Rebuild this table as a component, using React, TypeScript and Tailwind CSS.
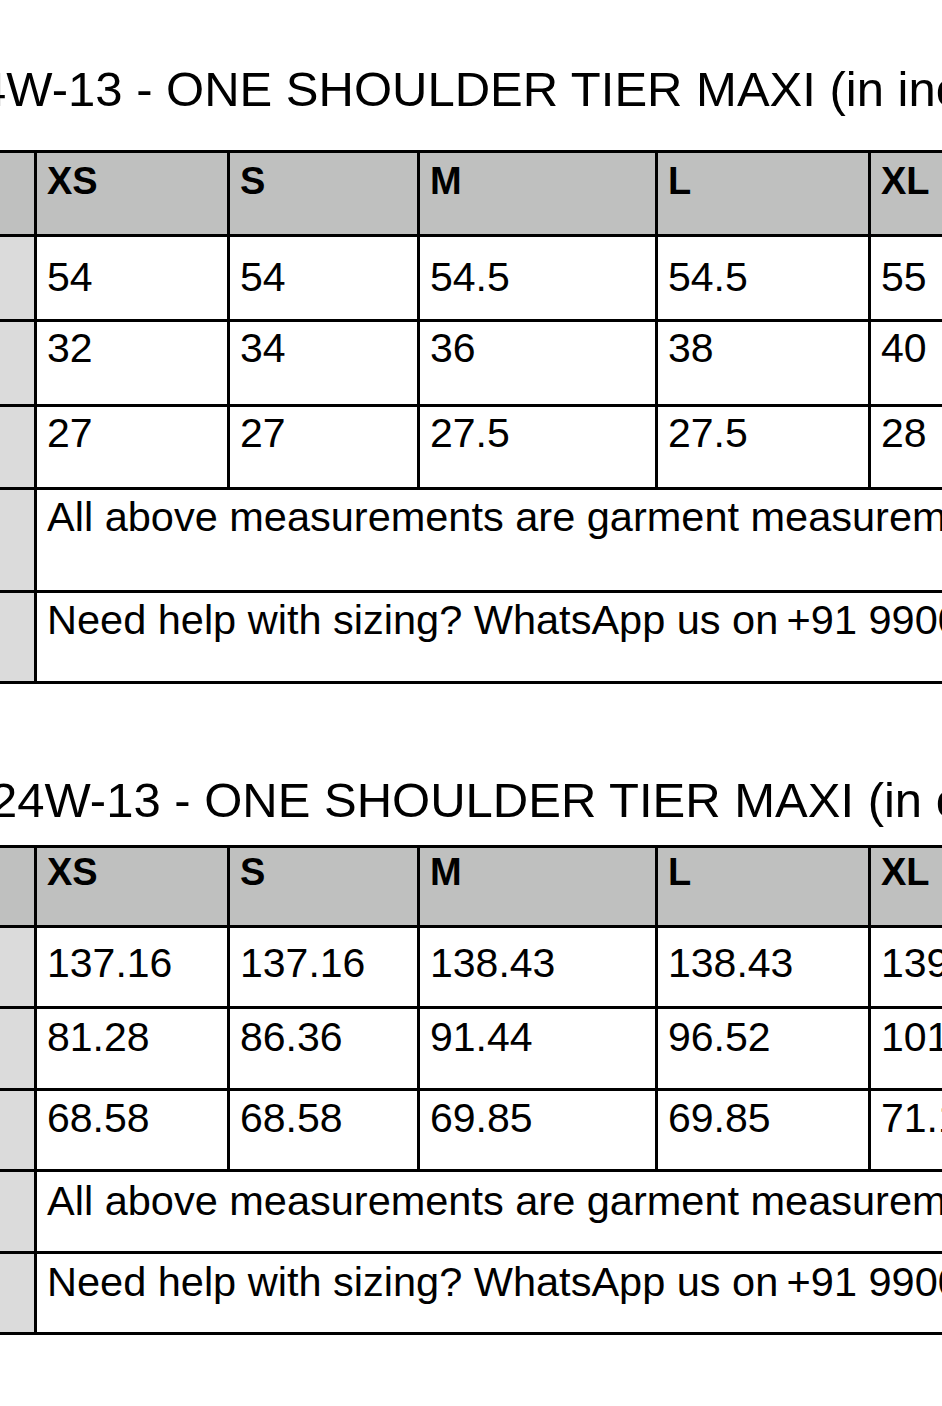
import React from 'react';

// ─── Data ─────────────────────────────────────────────────────────────────────

interface Row {
  cells: string[];
  h: string;   // row height incl. bottom border
  pt: string;  // text offset inside the cell
}

interface Chart {
  title: string;
  titleGap: string;
  tableGap: string;
  header: Row;
  rows: Row[];
  note: Row;
  help: Row;
}

const SIZES = ['XS', 'S', 'M', 'L', 'XL'];

// column widths include the 3px right border
const COLS = ['w-[193px]', 'w-[190px]', 'w-[238px]', 'w-[213px]', 'w-[240px]'];

const NOTE = 'All above measurements are garment measurements';
const HELP = 'Need help with sizing? WhatsApp us on\u2009+91 99000 00000';

const charts: Chart[] = [
  {
    title: 'SS24W-13 - ONE SHOULDER TIER MAXI (in inches)',
    titleGap: 'pt-[65px]',
    tableGap: 'mt-[36px]',
    header: { cells: SIZES, h: 'h-[84px]', pt: 'pt-[9px]' },
    rows: [
      { cells: ['54', '54', '54.5', '54.5', '55'], h: 'h-[85px]', pt: 'pt-[20px]' },
      { cells: ['32', '34', '36', '38', '40'], h: 'h-[85px]', pt: 'pt-[6px]' },
      { cells: ['27', '27', '27.5', '27.5', '28'], h: 'h-[83px]', pt: 'pt-[6px]' },
    ],
    note: { cells: [NOTE], h: 'h-[103px]', pt: 'pt-[6px]' },
    help: { cells: [HELP], h: 'h-[91px]', pt: 'pt-[6px]' },
  },
  {
    title: 'SS24W-13 - ONE SHOULDER TIER MAXI (in cm)',
    titleGap: 'pt-[92px]',
    tableGap: 'mt-[20px]',
    header: { cells: SIZES, h: 'h-[80px]', pt: 'pt-[5px]' },
    rows: [
      { cells: ['137.16', '137.16', '138.43', '138.43', '139.7'], h: 'h-[81px]', pt: 'pt-[15px]' },
      { cells: ['81.28', '86.36', '91.44', '96.52', '101.6'], h: 'h-[82px]', pt: 'pt-[8px]' },
      { cells: ['68.58', '68.58', '69.85', '69.85', '71.12'], h: 'h-[81px]', pt: 'pt-[7px]' },
    ],
    note: { cells: [NOTE], h: 'h-[82px]', pt: 'pt-[8px]' },
    help: { cells: [HELP], h: 'h-[81px]', pt: 'pt-[7px]' },
  },
];

// ─── Table pieces ─────────────────────────────────────────────────────────────

function SizeRow({ row, header }: { row: Row; header?: boolean }) {
  return (
    <div className={`flex border-b-[3px] border-black ${row.h} ${header ? 'bg-[#bfc0bf]' : ''}`}>
      {/* label column, cropped by the frame */}
      <div className={`w-[37px] shrink-0 border-r-[3px] border-black ${header ? 'bg-[#bfc0bf]' : 'bg-[#dbdbdb]'}`} />
      {row.cells.map((cell, i) => (
        <div
          key={i}
          className={`${COLS[i]} shrink-0 border-r-[3px] border-black pl-[10px] ${row.pt} leading-none ${
            header ? 'text-[38px] font-bold' : 'text-[41px]'
          }`}
        >
          {cell}
        </div>
      ))}
    </div>
  );
}

function NoteRow({ row }: { row: Row }) {
  return (
    <div className={`flex border-b-[3px] border-black ${row.h}`}>
      <div className="w-[37px] shrink-0 border-r-[3px] border-black bg-[#dbdbdb]" />
      <div className={`flex-1 whitespace-nowrap pl-[10px] ${row.pt} text-[41.5px] leading-none`}>
        {row.cells[0]}
      </div>
    </div>
  );
}

function SizeChart({ chart }: { chart: Chart }) {
  return (
    <section>
      <div className={`flex justify-center ${chart.titleGap}`}>
        <h1 className="shrink-0 whitespace-nowrap text-[49px] leading-none font-normal">{chart.title}</h1>
      </div>

      <div className={`w-[1150px] border-t-[3px] border-black ${chart.tableGap}`}>
        <SizeRow row={chart.header} header />
        {chart.rows.map((row, i) => (
          <SizeRow key={i} row={row} />
        ))}
        <NoteRow row={chart.note} />
        <NoteRow row={chart.help} />
      </div>
    </section>
  );
}

// ─── Page ─────────────────────────────────────────────────────────────────────

export default function App() {
  return (
    <div className="h-[1406px] w-[942px] overflow-hidden bg-white text-black font-['Liberation_Sans',Arial,sans-serif]">
      {charts.map((chart, i) => (
        <SizeChart key={i} chart={chart} />
      ))}
    </div>
  );
}
